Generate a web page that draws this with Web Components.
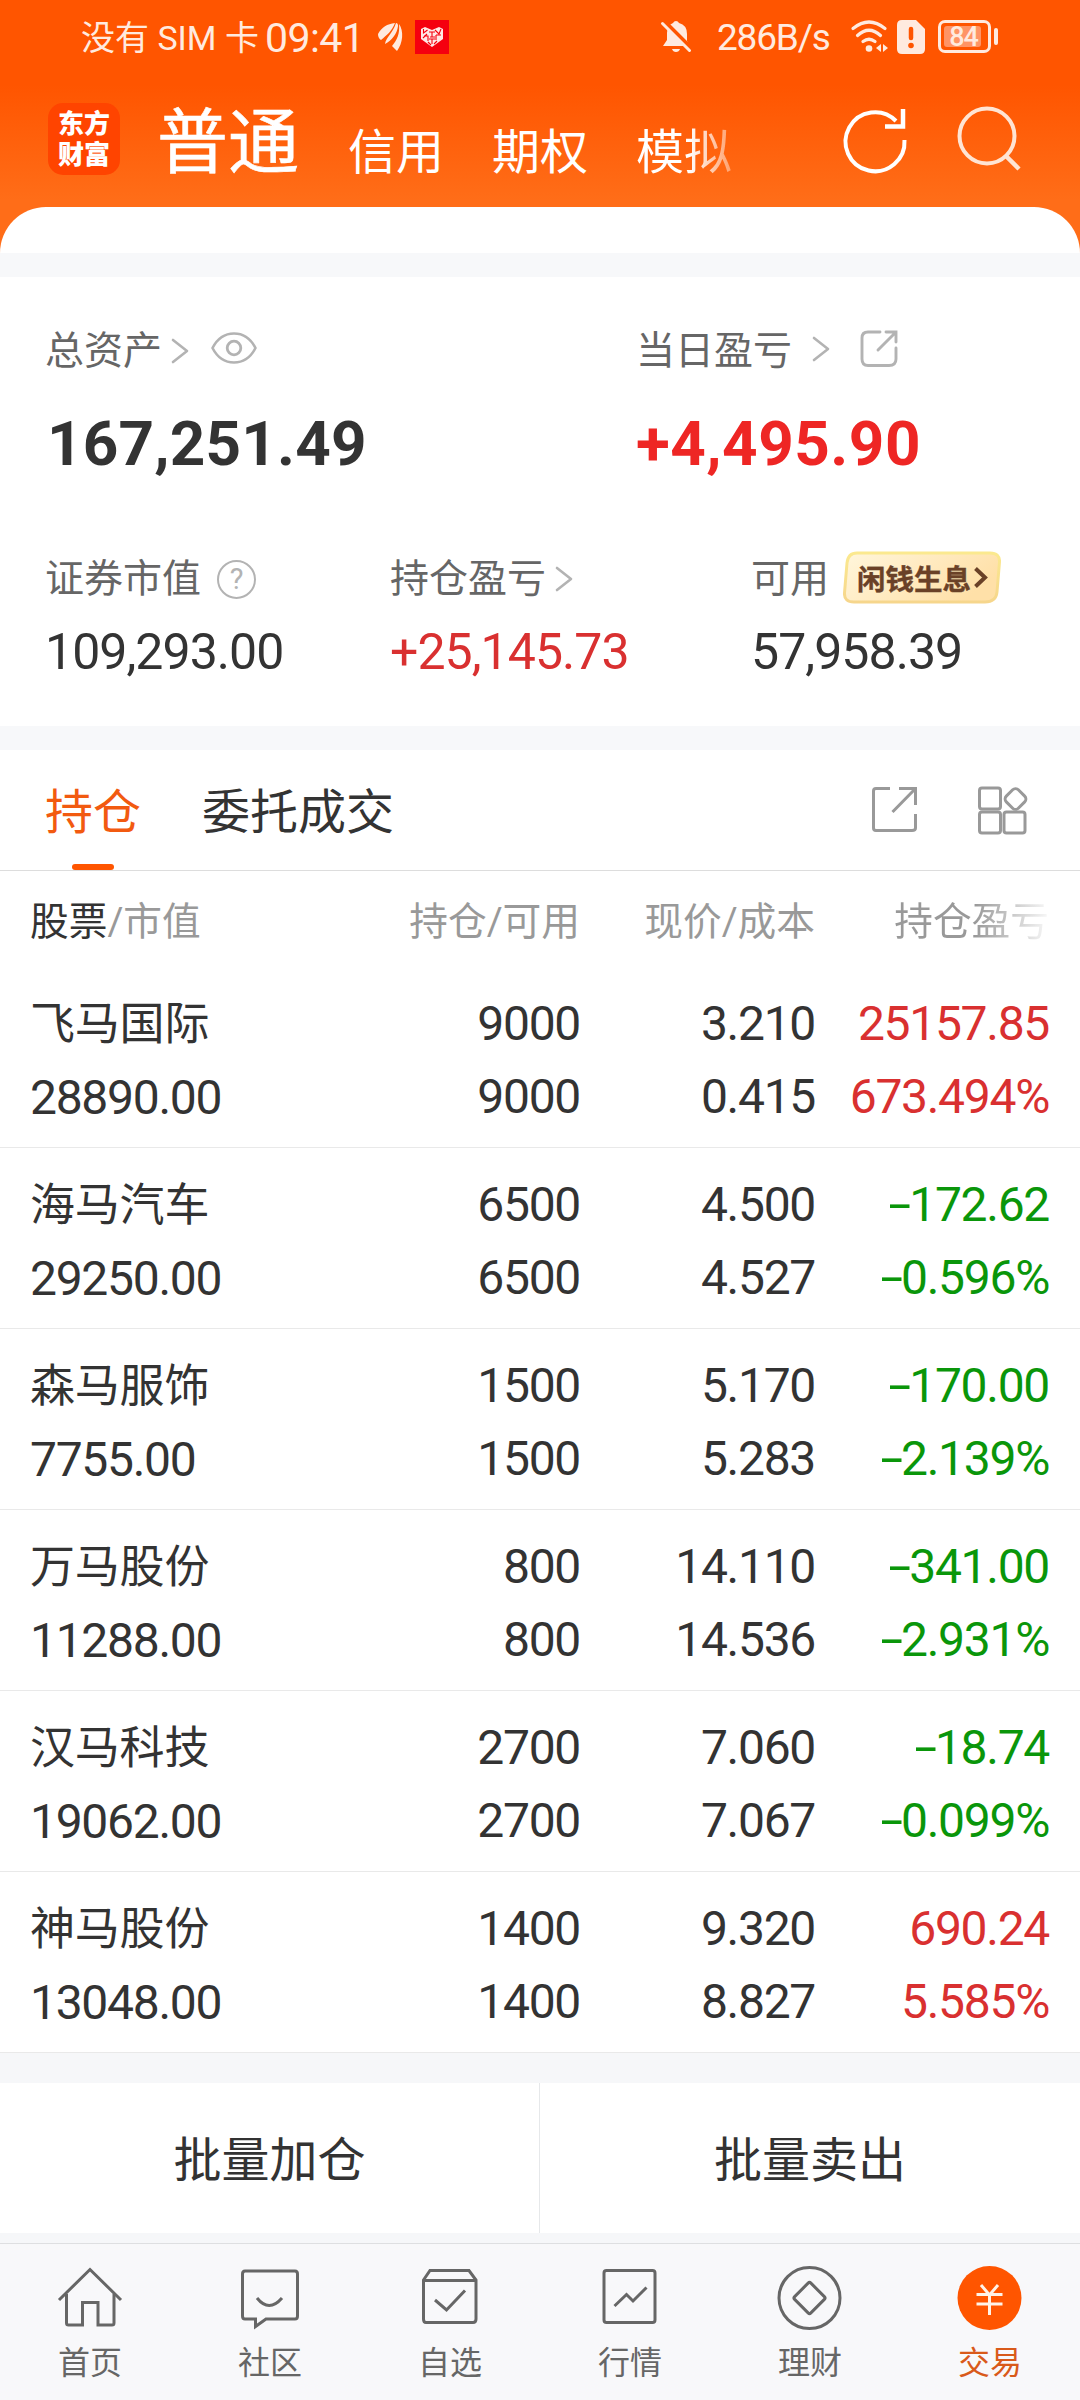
<!DOCTYPE html>
<html lang="zh-CN">
<head>
<meta charset="utf-8">
<meta name="viewport" content="width=1080">
<title>交易</title>
<style>
html,body{margin:0;padding:0}
body{width:1080px;height:2400px;overflow:hidden;background:#fff;font-family:Roboto,"Noto Sans CJK SC",sans-serif;color:#333}
</style>
</head>
<body>
<trade-app></trade-app>
<script>
const define=(name,css,view)=>customElements.define(name,class extends HTMLElement{
  connectedCallback(){
    if(this.shadowRoot)return;
    this.attachShadow({mode:'open'}).innerHTML=`<style>${css}</style>${typeof view==='function'?view(this):view}`;
  }
});

// name: [width, height, markup]
const ICONS={
  feather:[26,30,'<g fill="currentColor"><path d="M0 12C4 5 9 2 17 1C14 9 9 13 3 18Q0 16 0 12Z"/><path d="M18 1Q20 1 20 4C19 12 14 18 7 22C8 15 15 11 18 1Z"/><path d="M21 2C26 9 25 21 19 29L14 24C19 18 22 12 21 2Z"/></g>'],
  heart:[34,34,'<rect width="34" height="34" fill="#f5000f"/><path d="M17 27L6 19V9L10 7L17 10L24 7L28 9V19Z" fill="#ffe9e6"/><g stroke="#f5000f" stroke-width="1.100" fill="none"><path d="M8.500 9v4l4-3M12 14l-4 4M20 10l4 4 2-5M14 12h6M15 17h5M17 12v5M9 16h4v5M21 15h5M21 20v-5M14 19h6M17 19v5M13 22l3 3M22 21l-3 3"/></g>'],
  bell:[30,34,'<path d="M15 1q2 0 3 2q8 2 8 11v7l3 5H2l4-6V13Q6 5 12 3Q13 1 15 1ZM11 29h8q-1 3-4 3t-4-3Z" fill="currentColor"/><path d="M3 1L32 30" stroke="#ff5500" stroke-width="4"/><path d="M1.500 3.500L28.500 30.500" stroke="currentColor" stroke-width="3" stroke-linecap="round"/>'],
  wifi:[38,34,'<g fill="none" stroke="currentColor" stroke-width="3.2" stroke-linecap="round"><path d="M2 8.500Q18-4.500 34 8.500M6.500 15.500Q18 5 29.500 15.500M12 21.500Q18 17 24 21.500"/></g><circle cx="18" cy="28.500" r="3.300" fill="currentColor"/><path d="M30 24v8l-5-4ZM32 24l5 4-5 4Z" fill="currentColor"/>'],
  sim:[28,34,'<path d="M5 0H19L28 9V29Q28 34 23 34H5Q0 34 0 29V5Q0 0 5 0Z" fill="currentColor"/><path d="M14 9v9" stroke="#ff5500" stroke-width="4.500" stroke-linecap="round"/><circle cx="14" cy="25.500" r="2.800" fill="#ff5500"/>'],
  refresh:[64,64,'<path d="M52 15A29.500 29.500 0 1 0 60.500 34" fill="none" stroke="currentColor" stroke-width="4"/><path d="M59 3V20.500H41" fill="none" stroke="currentColor" stroke-width="4.500"/>'],
  search:[64,66,'<circle cx="30" cy="30" r="27.500" fill="none" stroke="currentColor" stroke-width="4"/><path d="M49 50L62 63" stroke="currentColor" stroke-width="4.500"/>'],
  chevron:[18,28,'<path d="M2 3L16 14L2 25" fill="none" stroke="currentColor" stroke-width="2.600" stroke-linecap="round" stroke-linejoin="round"/>'],
  eye:[46,32,'<path d="M1.500 16Q9 1.500 23 1.500T44.500 16Q37 30.500 23 30.500T1.500 16Z" fill="none" stroke="currentColor" stroke-width="2.600" stroke-linejoin="round"/><circle cx="23" cy="16" r="6.800" fill="none" stroke="currentColor" stroke-width="2.800"/>'],
  shareRound:[38,38,'<path d="M20 2H8Q2 2 2 8V29Q2 35.500 8 35.500H29Q36 35.500 36 29V18M26 2H36V12M36 2L18 20" fill="none" stroke="currentColor" stroke-width="2.900" stroke-linecap="round"/>'],
  share:[48,48,'<path d="M19 2.500H5Q2.500 2.500 2.500 5V42Q2.500 44.500 5 44.500H41Q44.500 44.500 44.500 42V28M28 2.500H44.500V19M44.500 2.500L21.500 26" fill="none" stroke="currentColor" stroke-width="3"/>'],
  grid:[50,50,'<g fill="none" stroke="currentColor" stroke-width="3"><rect x="1.500" y="2" width="21" height="21" rx="2.500"/><rect x="1.500" y="26" width="21" height="21" rx="2.500"/><rect x="26" y="26" width="21" height="21" rx="2.500"/><rect x="29" y="4.500" width="17" height="17" rx="4" transform="rotate(45 37.500 13)"/></g>'],
  home:[66,66,'<g fill="none" stroke="currentColor" stroke-width="3"><path d="M2 35L33 4.500L64 35"/><path d="M9.500 29V58Q9.500 60 11.500 60H25.500V37.500H41V60H55Q57 60 57 58V29"/></g>'],
  chat:[66,66,'<g fill="none" stroke="currentColor" stroke-width="3"><path d="M8 6H58Q60.500 6 60.500 9V51Q60.500 54 58 54H29L18.500 61.500V54H8Q5.500 54 5.500 51V9Q5.500 6 8 6Z"/><path d="M20 33Q32 48 45 33"/></g>'],
  check:[66,66,'<g fill="none" stroke="currentColor" stroke-width="3"><path d="M6.500 15L13 5.500H52L59 15V54Q59 57.500 56 57.500H9Q6.500 57.500 6.500 54ZM6.500 15.500H59"/><path d="M18 35L29.500 45L48 25.500"/></g>'],
  chart:[66,66,'<g fill="none" stroke="currentColor" stroke-width="3"><rect x="7" y="5.500" width="51" height="52" rx="2.500"/><path d="M17.500 41L29.500 29.500L36 36L49.500 22.500"/></g>'],
  wealth:[66,66,'<g fill="none" stroke="currentColor" stroke-width="3"><circle cx="32.500" cy="33" r="30.500"/><rect x="21" y="21.500" width="23" height="23" rx="2" transform="rotate(45 32.500 33)"/></g>'],
  trade:[66,66,'<circle cx="32.500" cy="33" r="32" fill="#ff5500"/><path d="M24 20L32.500 30L41 20M32.500 30V50M19.500 29.500H45.500M19.500 39H45.500" fill="none" stroke="#fff3e8" stroke-width="3"/>']
};
define('ui-icon',':host{display:block;flex:none}svg{display:block;overflow:visible}',e=>{
  const [w,h,m]=ICONS[e.getAttribute('name')];
  return `<svg width="${w}" height="${h}" viewBox="0 0 ${w} ${h}">${m}</svg>`;
});

define('status-bar',`
:host{display:flex;align-items:center;height:73px;padding:0 82px 0 81px;color:#ffeadf;box-sizing:border-box;white-space:nowrap}
.l,.r{display:flex;align-items:center}.r{margin-left:auto}
.c{font-size:34px;line-height:40px;width:184px;padding-top:2px}
.t{font-size:41px;line-height:44px;letter-spacing:-.6px;width:113px;padding-top:2px}
.s{font-size:37px;line-height:40px;width:134px;letter-spacing:-1.2px;padding-top:2px}
.b{box-sizing:border-box;width:53px;height:33px;border:3px solid;border-radius:7px;padding:3px;margin-left:13px}
.b span{display:block;height:21px;line-height:22px;border-radius:3px;background:#ff9465;font-size:27px;font-weight:500;text-align:center;letter-spacing:-1px;width:37px;text-indent:2px}
.n{width:4px;height:17px;border-radius:2px;background:currentColor;margin-left:3px}
`,`<div class="l"><span class="c">没有 SIM 卡</span><span class="t">09:41</span><ui-icon name="feather"></ui-icon><ui-icon name="heart" style="margin-left:11px"></ui-icon></div>
<div class="r"><ui-icon name="bell" style="margin-right:26px"></ui-icon><span class="s">286B/s</span><ui-icon name="wifi" style="margin-right:8px"></ui-icon><ui-icon name="sim"></ui-icon><div class="b"><span>84</span></div><div class="n"></div></div>`);

define('app-header',`
:host{display:flex;height:134px;box-sizing:border-box;padding:0 59px 0 48px;color:#fff;white-space:nowrap;align-items:flex-start}
.logo{width:72px;height:72px;margin-top:30px;border-radius:15px;background:#ff4400;font-weight:900;font-size:26px;line-height:31px;text-align:center;padding-top:6px;box-sizing:border-box}
.logo span{display:block}
.big{font-size:71px;line-height:80px;margin:30px 0 0 37px;-webkit-text-stroke:.6px #fff}
.tab{font-size:48px;line-height:56px;margin:52px 0 0 48px}
.fade{background:linear-gradient(90deg,#fff 55%,#ffffff60 100%);-webkit-background-clip:text;background-clip:text;color:transparent}
.i{display:flex;margin-left:auto;gap:49px;padding-top:33px}
.i ui-icon+ui-icon{color:#ffe4d3}
`,`<div class="logo"><span>东方</span><span>财富</span></div><span class="big">普通</span><span class="tab" style="margin-left:49px">信用</span><span class="tab">期权</span><span class="tab fade">模拟</span>
<div class="i"><ui-icon name="refresh"></ui-icon><ui-icon name="search"></ui-icon></div>`);

define('asset-item',`
:host{display:block;white-space:nowrap}
.k{display:flex;align-items:center;height:52px;font-size:39px;line-height:52px;color:#666}
.v{font-size:50px;line-height:60px;letter-spacing:-.95px;margin-top:17px}
:host([big]) .v{font-size:62px;font-weight:700;line-height:70px;margin-top:32px;letter-spacing:.2px;text-indent:2px}
:host([up]) .v{color:#d93030;text-indent:0}:host([up][big]) .v{color:#ee2624;text-indent:0;letter-spacing:.5px}
`,e=>`<div class="k"><span>${e.getAttribute('label')}</span><slot></slot></div><div class="v">${e.getAttribute('value')}</div>`);

define('help-mark',`:host{display:block;box-sizing:border-box;width:39px;height:39px;border:2.500px solid #b3b3b3;border-radius:50%;color:#b3b3b3;font-size:29px;line-height:35px;text-align:center;margin-left:16px}`,'?');

define('promo-badge',`
:host{display:block;position:relative;width:158px;height:53px;margin:-3px 0 0 14px;color:#6a4127}
svg{position:absolute;inset:0}
div{position:relative;display:flex;align-items:center;height:53px;padding-left:14px;font:700 28.500px/53px "Noto Sans CJK SC",sans-serif;-webkit-text-stroke:.4px #6a4127}
`,`<svg width="158" height="53" viewBox="0 0 158 53"><defs><linearGradient id="a" x1="0" x2="1" y1="0" y2=".4"><stop stop-color="#fff6dc"/><stop offset="1" stop-color="#ffe0a8"/></linearGradient><linearGradient id="b" x1="0" x2="0" y1="0" y2="1"><stop stop-color="#fbe98f"/><stop offset="1" stop-color="#f6d68c"/></linearGradient></defs><path d="M14 2H147Q157 2 156.500 11L154 41Q153 51 142 51H11Q1 51 1.500 42L4 12Q5 2 14 2Z" fill="url(#a)" stroke="url(#b)" stroke-width="3"/><path d="M132.500 17.500L142 26.500L132.500 35.500" fill="none" stroke="#6a4127" stroke-width="4"/></svg><div>闲钱生息</div>`);

define('asset-panel',`
:host{display:block;height:449px;background:#fff;box-sizing:border-box;padding:48px 0 0 45px}
.a,.b{display:grid}.a{grid-template-columns:591px 1fr}.b{grid-template-columns:345px 361px 1fr;margin-top:74px}
ui-icon{color:#b3b3b3}
`,`<div class="a"><asset-item big label="总资产" value="167,251.49"><ui-icon name="chevron" style="margin-left:9px"></ui-icon><ui-icon name="eye" style="margin:-6px 0 0 22px"></ui-icon></asset-item>
<asset-item big up label="当日盈亏" value="+4,495.90"><ui-icon name="chevron" style="margin:-4px 0 0 20px"></ui-icon><ui-icon name="shareRound" style="margin:-5px 0 0 30px"></ui-icon></asset-item></div>
<div class="b"><asset-item label="证券市值" value="109,293.00"><help-mark></help-mark></asset-item>
<asset-item up label="持仓盈亏" value="+25,145.73"><ui-icon name="chevron" style="margin-left:9px"></ui-icon></asset-item>
<asset-item label="可用" value="57,958.39"><promo-badge></promo-badge></asset-item></div>`);

define('position-tabs',`
:host{display:flex;height:121px;box-sizing:border-box;border-bottom:1px solid #ddd;background:#fff;padding:0 52px 0 45px;font-size:48px;line-height:126px;align-items:flex-start}
.t{margin-right:61px}.on{position:relative;color:#f25a10}
.on::after{content:"";position:absolute;left:27px;top:114px;width:42px;height:6px;border-radius:3px;background:#ff5500}
.i{display:flex;gap:59px;margin:36px 0 0 auto;color:#999}
`,`<span class="t on">持仓</span><span class="t">委托成交</span><div class="i"><ui-icon name="share"></ui-icon><ui-icon name="grid"></ui-icon></div>`);

const COLS='display:grid;grid-template-columns:300px 250px 235px 234px;padding:0 31px 0 30px;box-sizing:border-box;background:#fff;white-space:nowrap;';
define('table-head',`
:host{${COLS}height:96px;font-size:38.700px;line-height:102px;color:#999}
span{text-align:right}b{font-weight:400;color:#333}.f{text-align:left}
.fade{margin-left:79px;background:linear-gradient(90deg,#999 52%,#99999910 100%);-webkit-background-clip:text;background-clip:text;color:transparent}
`,`<span class="f"><b>股票</b>/市值</span><span>持仓/可用</span><span>现价/成本</span><span class="fade">持仓盈亏</span>`);

define('stock-row',`
:host{${COLS}height:181px;border-bottom:1px solid #e9e9e9;padding-top:20px;font-size:48px;letter-spacing:-1.300px}
div{text-align:right;line-height:73px}
.f{text-align:left}.n{font-size:45px;letter-spacing:-.2px}
.up{color:#d93030}.down{color:#0a960a}
i{font-style:normal;display:inline-block;transform:scaleX(1.700);transform-origin:100% 50%}
`,e=>{
  const d=e.getAttribute('data').split('|'),neg=d[6][0]==='-',c=neg?'down':'up';
  const m=s=>s.replace('-','<i>-</i>');
  return `<div class="f"><span class="n">${d[0]}</span><br>${d[1]}</div><div>${d[2]}<br>${d[3]}</div><div>${d[4]}<br>${d[5]}</div><div class="${c}">${m(d[6])}<br>${m(d[7])}</div>`;
});

define('batch-actions',`
:host{display:grid;grid-template-columns:540px 540px;height:190px;padding:30px 0 10px;box-sizing:border-box;background:#f6f7f9;font-size:48px;line-height:156px;text-align:center}
div{height:150px;background:#fff}div:first-of-type{box-sizing:border-box;border-right:1px solid #e6e8ea}
`,`<div>批量加仓</div><div>批量卖出</div>`);

define('nav-item',`
:host{display:flex;flex-direction:column;align-items:center;color:#666;font-size:32px;line-height:44px;padding-top:21px}
:host([on]){color:#d95a1a}span{margin-top:10px}
`,e=>`<ui-icon name="${e.getAttribute('icon')}"></ui-icon><span>${e.getAttribute('label')}</span>`);
define('bottom-nav',`:host{display:grid;grid-template-columns:repeat(6,180px);height:157px;box-sizing:border-box;border-top:1px solid #dedfe1;background:#f8f8fa}`,
[['home','首页'],['chat','社区'],['check','自选'],['chart','行情'],['wealth','理财'],['trade','交易']].map(([i,l],n)=>`<nav-item icon="${i}" label="${l}" ${n===5?'on':''}></nav-item>`).join(''));

const STOCKS=['飞马国际|28890.00|9000|9000|3.210|0.415|25157.85|673.494%','海马汽车|29250.00|6500|6500|4.500|4.527|-172.62|-0.596%','森马服饰|7755.00|1500|1500|5.170|5.283|-170.00|-2.139%','万马股份|11288.00|800|800|14.110|14.536|-341.00|-2.931%','汉马科技|19062.00|2700|2700|7.060|7.067|-18.74|-0.099%','神马股份|13048.00|1400|1400|9.320|8.827|690.24|5.585%'];
define('trade-app',`
:host{display:block;width:1080px;height:2400px;overflow:hidden}
.top{background:linear-gradient(#ff5500 0,#ff5500 85px,#ff6d18 200px,#ff6d18 253px);height:253px}
.cap{height:46px;background:#fff;border-radius:48px 48px 0 0}
.gap{height:24px;background:#f7f8fa}
`,`<div class="top"><status-bar></status-bar><app-header></app-header><div class="cap"></div></div><div class="gap"></div>
<asset-panel></asset-panel><div class="gap"></div><position-tabs></position-tabs><table-head></table-head>
${STOCKS.map(s=>`<stock-row data="${s}"></stock-row>`).join('')}
<batch-actions></batch-actions><bottom-nav></bottom-nav>`);
</script>
</body>
</html>
